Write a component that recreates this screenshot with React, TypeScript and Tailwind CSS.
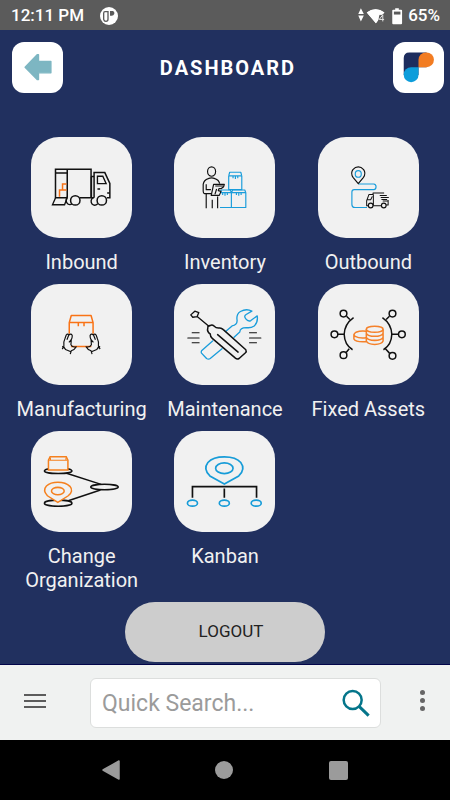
import type { ReactNode } from "react";

const ORANGE = "#f97316";
const BLUE = "#1a9ddb";
const INK = "#111111";

function InboundIcon() {
  return (
    <svg viewBox="34 22 301 301" className="size-full" fill="none" stroke={INK} strokeWidth="4.5" aria-hidden="true">
      <path d="M142 203H107V118H213V203H179M142 118V203M107 129H142" />
      <path d="M107 204L98 224H134L142 203M134 224L140 208" strokeWidth="4" />
      <path d="M213 140H222M222 203V128H254L269 160V203H260M213 203H222M214 140V203" />
      <path d="M232 161V139H248L258 161ZM232 177H240M261 189H269" strokeWidth="4" />
      <path d="M119 200V180H140M128 179V162H140" stroke={ORANGE} />
      <path d="M142 200Q135 212 143 221Q150 226 157 221M219 202Q209 211 216 222Q224 229 233 221" strokeWidth="4" />
      <circle cx="166" cy="211" r="14" fill="#f1f1f1" />
      <circle cx="245" cy="211" r="14" fill="#f1f1f1" />
    </svg>
  );
}

function InventoryIcon() {
  return (
    <svg viewBox="28 22 301 301" className="size-full" fill="none" stroke={INK} strokeWidth="3.5" strokeLinejoin="round" aria-hidden="true">
      <g stroke={BLUE}>
        <path d="M191 138H230V179H191ZM191 138L194 127H227L230 138M204 140V145M211 140V147M218 140V145" />
        <path d="M165 232H242V188M199 184V232M166 188L169 180H196L199 188L203 180H239L242 188ZM173 190V195M180 190V197M187 190V195M214 190V195M221 190V197M228 190V195" />
      </g>
      <ellipse cx="140" cy="125" rx="12" ry="14" />
      <path d="M124 234V191H119Q115 190 115 184V163Q117 150 130 146Q140 142 150 146Q162 150 164 161M124 163V179H138M142 234V209M124 191H140M158 234V199" />
      <path d="M146 163H178L176 170L168 176H162L160 182L168 184L163 196H139Z" fill="#f1f1f1" />
      <path d="M151 168H176M155 177L150 193" />
    </svg>
  );
}

function OutboundIcon() {
  return (
    <svg viewBox="24 22 301 301" className="size-full" fill="none" stroke={INK} strokeWidth="3.5" strokeLinejoin="round" aria-hidden="true">
      <path d="M144 162H190Q197 163 197 170Q197 178 190 179H132Q125 179 125 186V223Q125 232 134 232H170" stroke={BLUE} />
      <path d="M144 161L129 143Q120 130 128 119Q135 111 144 111Q153 111 160 119Q168 130 159 143Z" />
      <ellipse cx="144" cy="132" rx="9" ry="10" stroke={BLUE} />
      <path d="M174 227H169V212L176 193H188V189H221M189 193V227M189 227H212M227 225H233V210M171 209H181L186 199M208 196H229M211 202H235M213 208H230M217 213H234" strokeWidth="3" />
      <circle cx="181" cy="226" r="7" fill="#f1f1f1" />
      <circle cx="220" cy="226" r="7" fill="#f1f1f1" />
    </svg>
  );
}

function Hand() {
  return (
    <path d="M157 206L162 198Q160 184 165 175L169 164Q173 159 177 163L171 178M177 164Q184 158 187 166Q187 172 184 178L177 186M184 178L183 193Q188 202 199 199Q195 207 184 211L181 221M157 198Q164 201 167 207L183 214" />
  );
}

function ManufacturingIcon() {
  return (
    <svg viewBox="64 12 301 301" className="size-full" fill="none" stroke={INK} strokeWidth="3.5" strokeLinejoin="round" aria-hidden="true">
      <path d="M178 160V127L184 106H243L249 127V160M178 127H249M205 128V138M222 128V138M183 198H244" stroke={ORANGE} strokeWidth="4.5" />
      <Hand />
      <g transform="matrix(-1 0 0 1 427 0)">
        <Hand />
      </g>
    </svg>
  );
}

function MaintenanceIcon() {
  return (
    <svg viewBox="43 12 301 301" className="size-full" fill="none" stroke={INK} strokeWidth="4.5" strokeLinejoin="round" strokeLinecap="round" aria-hidden="true">
      <path d="M196 154L216 137Q232 134 231 120Q228 102 241 94Q259 84 275 93L258 103Q250 108 257 116Q264 125 272 121L291 107Q294 126 282 137Q272 144 258 142Q240 142 239 155L222 171M158 182L126 210Q123 214 125 218L140 234Q146 238 151 234L186 205" stroke={BLUE} strokeWidth="4" />
      <path d="M93 104L105 93L117 97L112 109L99 111ZM112 109L147 138" strokeWidth="4" />
      <path d="M144 142Q142 137 151 136Q156 132 162 137Q169 144 178 143Q184 142 190 148L257 208Q260 213 256 217L237 234Q231 237 226 233L157 174Q151 169 151 161Q140 154 144 142ZM173 163L234 215" />
      <path d="M97 157H118M84 173H118M97 187H118M268 157H289M268 173H302M268 187H289" strokeWidth="3" />
    </svg>
  );
}

function FixedAssetsIcon() {
  return (
    <svg viewBox="40 12 301 301" className="size-full" fill="none" stroke={INK} strokeWidth="4.5" aria-hidden="true">
      <path d="M146 112Q119 131 118 162Q119 194 143 208M135 118L125 108M133 205L124 216M118 162H99M232 112Q259 131 260 162Q259 194 235 208M243 118L253 108M241 205L253 218M260 162H279" />
      <circle cx="116" cy="100" r="10" />
      <circle cx="89" cy="162" r="10" />
      <circle cx="116" cy="224" r="10" />
      <circle cx="262" cy="100" r="10" />
      <circle cx="290" cy="162" r="10" />
      <circle cx="262" cy="226" r="10" />
      <g stroke="#f5812a">
        <path d="M184 153Q168 150 153 156Q143 162 151 168Q164 175 184 172M147 162V176Q152 186 184 184" />
        <ellipse cx="209" cy="147" rx="25" ry="9" />
        <path d="M184 147V182Q188 192 209 192Q230 192 234 182V147M184 159Q189 168 209 168Q229 168 234 159M184 171Q189 180 209 180Q229 180 234 171" />
      </g>
    </svg>
  );
}

function ChangeOrganizationIcon() {
  return (
    <svg viewBox="64 18 301 301" className="size-full" fill="none" stroke={INK} strokeWidth="4.5" aria-hidden="true">
      <ellipse cx="145" cy="137" rx="41" ry="8" />
      <ellipse cx="145" cy="233" rx="41" ry="9" />
      <ellipse cx="283" cy="185" rx="41" ry="8" />
      <path d="M170 144L273 177M175 226L271 194" />
      <g stroke="#f5801e">
        <path d="M116 134V105L121 95H169L174 105V134Z" fill="#f1f1f1" />
        <path d="M118 105H172M122 98V105M168 98V105" strokeWidth="3" />
        <path d="M144 231L113 211Q98 195 110 182Q122 171 144 171Q168 171 180 183Q192 197 175 211Z" fill="#f1f1f1" />
        <ellipse cx="144" cy="197" rx="19" ry="11" />
      </g>
    </svg>
  );
}

function KanbanIcon() {
  return (
    <svg viewBox="43 18 301 301" className="size-full" fill="none" stroke="#179cd8" strokeWidth="5" aria-hidden="true">
      <path d="M193 176L150 152Q129 132 144 112Q159 95 193 95Q228 95 242 112Q257 132 236 152Z" />
      <ellipse cx="193" cy="129" rx="26" ry="16" />
      <path d="M98 217V184H289V217M193 189V217" stroke={INK} />
      <ellipse cx="98" cy="233" rx="15" ry="9" />
      <ellipse cx="193" cy="233" rx="15" ry="9" />
      <ellipse cx="288" cy="233" rx="15" ry="9" />
    </svg>
  );
}

const modules: { label: string; icon: ReactNode }[] = [
  { label: "Inbound", icon: <InboundIcon /> },
  { label: "Inventory", icon: <InventoryIcon /> },
  { label: "Outbound", icon: <OutboundIcon /> },
  { label: "Manufacturing", icon: <ManufacturingIcon /> },
  { label: "Maintenance", icon: <MaintenanceIcon /> },
  { label: "Fixed Assets", icon: <FixedAssetsIcon /> },
  { label: "Change Organization", icon: <ChangeOrganizationIcon /> },
  { label: "Kanban", icon: <KanbanIcon /> },
];

function StatusBar() {
  return (
    <div className="flex h-[30px] items-center bg-[#5b5b5b] pt-0.5 pr-2.5 pl-[11px] text-[17px] font-medium text-white">
      <span>12:11 PM</span>
      <svg viewBox="0 0 54 54" className="ml-4 size-[18px]" aria-hidden="true">
        <circle cx="27" cy="27" r="27" fill="#fff" />
        <path d="M24 14H15Q11 14 11 19V37Q12 43 18 43Q24 43 24 37Z" fill="none" stroke="#5b5b5b" strokeWidth="4" />
        <path d="M30 12H39Q44 14 43 20Q41 26 35 26H30Z" fill="#5b5b5b" />
      </svg>
      <div className="ml-auto flex items-center">
        <svg viewBox="397 20 136 52" className="mr-[5px] h-[17px] w-[45px]" fill="#fff" aria-hidden="true">
          <path d="M405 21L414 38H397ZM405 61L397 43H414ZM423 34Q450 13 477 34L469 43L451 67Z" />
          <path d="M459 67V40H479V67Z" fill="#5b5b5b" />
          <path d="M423 34Q450 13 477 34L469 41H462L457 58L451 67Z" />
          <path d="M472 61V41L461 55H476" fill="none" stroke="#e5e5e5" strokeWidth="3" />
          <path d="M501 28Q501 25 504 25H510V21H521V25H528Q531 25 531 28V67Q531 70 528 70H504Q501 70 501 67Z" />
          <path d="M506 31H526V40H506Z" fill="#5b5b5b" />
        </svg>
        <span>65%</span>
      </div>
    </div>
  );
}

export default function App() {
  return (
    <div className="flex min-h-screen flex-col bg-[#21305f] font-[Roboto,sans-serif]">
      <StatusBar />
      <header className="flex items-center justify-between pt-3 pr-1.5 pl-3">
        <button type="button" aria-label="Back" className="size-[51px] rounded-xl bg-white">
          <svg viewBox="36 127 152 152" className="size-full" aria-hidden="true">
            <path d="M75 202L111 165H115V185H152V219H115V239H111Z" fill="#7db6c2" stroke="#7db6c2" strokeWidth="4" strokeLinejoin="round" />
          </svg>
        </button>
        <h1 className="text-xl font-bold tracking-widest text-white">DASHBOARD</h1>
        <button type="button" aria-label="Organization home" className="size-[51px] rounded-xl bg-white">
          <svg viewBox="505 127 152 152" className="size-full" aria-hidden="true">
            <path d="M537 225V175Q537 158 554 158H605V202H581V225Z" fill="#1d2d5e" />
            <path d="M581 202V180A22 22 0 0 1 603 158H605A22 22 0 0 1 605 202Z" fill="#f27c22" />
            <path d="M581 202V225A22 22 0 0 1 537 225V224A22 22 0 0 1 559 202Z" fill="#0d9ddb" />
          </svg>
        </button>
      </header>
      <main className="flex flex-1 flex-col items-center border-b border-[#02054a] pt-11 pb-0.5">
        <nav aria-label="Modules" className="grid w-full grid-cols-3 gap-y-2.5 px-2.5">
          {modules.map((module) => (
            <a key={module.label} href="#" className="flex flex-col items-center gap-3 text-center text-xl leading-6 text-[#f1f1f1]">
              <span className="block size-[101px] overflow-hidden rounded-[28px] bg-[#f1f1f1]">{module.icon}</span>
              <span>{module.label}</span>
            </a>
          ))}
        </nav>
        <button type="button" className="mt-2.5 h-[60px] w-[200px] rounded-full bg-[#cdcdcd] pl-3 text-[17px] text-[#222222]">
          LOGOUT
        </button>
      </main>
      <footer>
        <form className="flex h-[75px] items-center bg-[#f0f2f1] pr-[18px] pl-6" onSubmit={(event) => event.preventDefault()}>
          <button type="button" aria-label="Menu" className="flex w-[22px] flex-col gap-1 pb-1">
            <span className="h-0.5 w-full bg-[#5c5c5c]" />
            <span className="h-0.5 w-full bg-[#5c5c5c]" />
            <span className="h-0.5 w-full bg-[#5c5c5c]" />
          </button>
          <div className="mr-[31px] ml-11 flex h-[50px] min-w-0 flex-1 items-center rounded-md border border-[#dcdedd] bg-white pr-2.5 pl-[11px]">
            <input type="text" aria-label="Quick Search" placeholder="Quick Search..." className="h-full min-w-0 flex-1 bg-transparent pt-0.5 text-[23px] text-[#333333] outline-none placeholder:text-[#9b9b9b]" />
            <button type="submit" aria-label="Search" className="size-7">
              <svg viewBox="350 278 84 84" className="size-full" fill="none" stroke="#04758a" aria-hidden="true">
                <circle cx="382" cy="311" r="27" strokeWidth="7.5" />
                <path d="M402 331L430 358" strokeWidth="9" />
              </svg>
            </button>
          </div>
          <button type="button" aria-label="More options" className="flex w-5 flex-col items-center gap-[3px] pb-1">
            <span className="size-[5px] rounded-full bg-[#666666]" />
            <span className="size-[5px] rounded-full bg-[#666666]" />
            <span className="size-[5px] rounded-full bg-[#666666]" />
          </button>
        </form>
        <div className="flex h-[60px] items-center justify-around bg-black px-[54px]">
          <button type="button" aria-label="System back">
            <svg viewBox="0 0 18 20" className="h-5 w-[18px]" aria-hidden="true">
              <path d="M1 10L17 1V19Z" fill="#9b9b9b" stroke="#9b9b9b" strokeWidth="1.5" strokeLinejoin="round" />
            </svg>
          </button>
          <button type="button" aria-label="System home" className="size-[18px] rounded-full bg-[#9b9b9b]" />
          <button type="button" aria-label="Recent apps" className="size-[19px] rounded-xs bg-[#9b9b9b]" />
        </div>
      </footer>
    </div>
  );
}
